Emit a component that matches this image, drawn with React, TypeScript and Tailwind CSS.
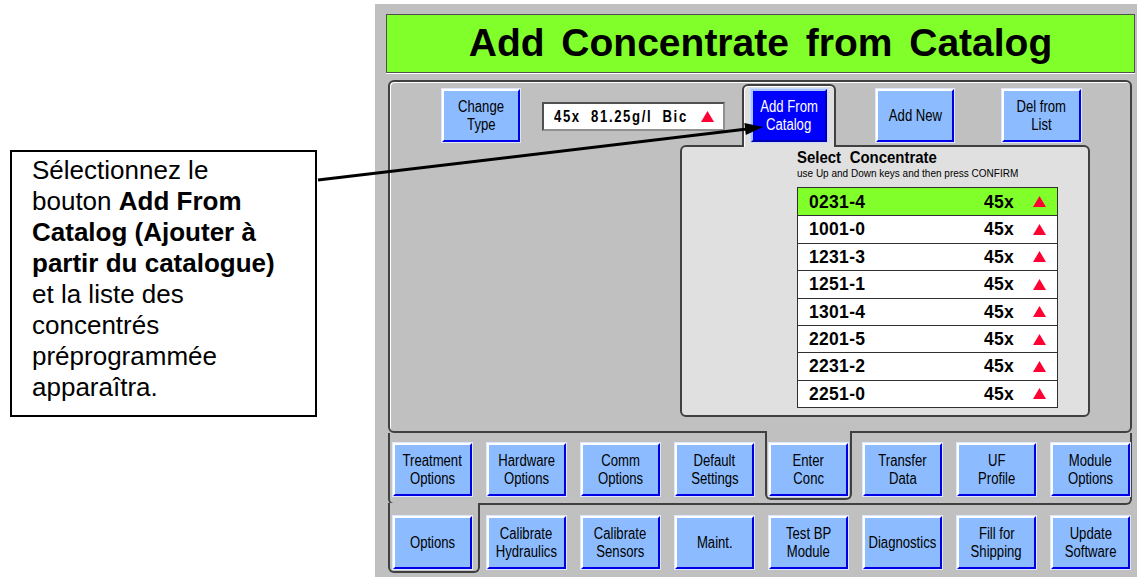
import React from 'react';

const ARIAL = "font-['Liberation_Sans',Arial,sans-serif]";

interface BtnProps {
  lines: string[];
  selected?: boolean;
  w?: string;
}

// the panel font is a narrow grotesque; Liberation Sans squeezed to Arial Narrow widths
const Btn: React.FC<BtnProps> = ({ lines, selected = false, w = 'w-[79px]' }) => (
  <div
    className={`${w} ${ARIAL} flex h-[53px] shrink-0 flex-col items-center justify-center border-2 text-[16px] leading-[18px] ${
      selected
        ? 'border-t-[#a8c4ff] border-l-[#a8c4ff] border-r-[#0000b0] border-b-[#0000b0] bg-[#0000ff] text-white ring-1 ring-[#c8d8ff]'
        : 'border-t-white border-l-white border-r-[#0000e6] border-b-[#0000e6] bg-[#8cbcff] text-black ring-1 ring-[#dde8ff]'
    }`}
  >
    {lines.map((l) => (
      <span key={l} className="inline-block scale-x-[0.82] whitespace-nowrap">
        {l}
      </span>
    ))}
  </div>
);

const Tri = () => (
  <svg width="13" height="11" viewBox="0 0 13 11" className="shrink-0">
    <polygon points="6.5,0 13,11 0,11" fill="#ff0033" />
  </svg>
);

const concentrates = ['0231-4', '1001-0', '1231-3', '1251-1', '1301-4', '2201-5', '2231-2', '2251-0'];

const row2: { lines: string[]; tab?: boolean }[] = [
  { lines: ['Treatment', 'Options'] },
  { lines: ['Hardware', 'Options'] },
  { lines: ['Comm', 'Options'] },
  { lines: ['Default', 'Settings'] },
  { lines: ['Enter', 'Conc'], tab: true },
  { lines: ['Transfer', 'Data'] },
  { lines: ['UF', 'Profile'] },
  { lines: ['Module', 'Options'] },
];

const row3: { lines: string[]; tab?: boolean }[] = [
  { lines: ['Options'], tab: true },
  { lines: ['Calibrate', 'Hydraulics'] },
  { lines: ['Calibrate', 'Sensors'] },
  { lines: ['Maint.'] },
  { lines: ['Test BP', 'Module'] },
  { lines: ['Diagnostics'] },
  { lines: ['Fill for', 'Shipping'] },
  { lines: ['Update', 'Software'] },
];

const App: React.FC = () => {
  return (
    <div className="relative flex h-[577px] w-[1139px] items-start overflow-hidden bg-white">
      {/* callout */}
      <div
        className={`${ARIAL} ml-[10px] mt-[150px] h-[267px] w-[307px] shrink-0 border-2 border-black bg-white pl-[20px] pt-[3px] text-[26px] leading-[31px] text-black`}
      >
        Sélectionnez le
        <br />
        bouton <b>Add From</b>
        <br />
        <b>Catalog (Ajouter à</b>
        <br />
        <b>partir du catalogue)</b>
        <br />
        et la liste des
        <br />
        concentrés
        <br />
        préprogrammée
        <br />
        apparaîtra.
      </div>

      {/* machine screen */}
      <div className="ml-[58px] mt-[4px] h-[573px] w-[762px] shrink-0 overflow-hidden bg-[#c0c0c0]">
        <div className="ml-[11px] mt-[10px] flex h-[59px] w-[749px] items-center justify-center border border-[#505050] bg-[#80ff2b] shadow-[0_1px_0_#ffffff]">
          <span className={`${ARIAL} text-[39px] font-bold text-black [word-spacing:6px]`}>
            Add Concentrate from Catalog
          </span>
        </div>

        {/* upper frame */}
        <div className="ml-[13px] mt-[7px] h-[353px] w-[744px] rounded-[6px] border-2 border-[#404040] shadow-[inset_1px_1px_0_#ffffff]">
          <div className="flex items-start">
            <div className="ml-[52px] mt-[7px]">
              <Btn lines={['Change', 'Type']} w="w-[78px]" />
            </div>
            <div className="ml-[22px] mt-[20px] flex h-[29px] w-[183px] items-center overflow-hidden border-2 border-t-[#505050] border-l-[#505050] border-r-[#909090] border-b-[#909090] bg-white pl-[10px]">
              <span
                className={`${ARIAL} inline-block w-[147px] origin-left scale-x-[0.82] whitespace-nowrap text-[16px] font-bold tracking-[2px] text-black [word-spacing:6px]`}
              >
                45x 81.25g/l Bic
              </span>
              <Tri />
            </div>
            <div className="relative z-10 ml-[17px] mt-[2px] -mb-[2px] rounded-t-[6px] border-2 border-b-0 border-[#404040] bg-[#e0e0e0] px-[7px] pt-[3px] pb-[5px] shadow-[inset_1px_1px_0_#ffffff]">
              <Btn lines={['Add From', 'Catalog']} selected w="w-[76px]" />
            </div>
            <div className="ml-[40px] mt-[7px]">
              <Btn lines={['Add New']} w="w-[78px]" />
            </div>
            <div className="ml-[48px] mt-[7px]">
              <Btn lines={['Del from', 'List']} />
            </div>
          </div>

          {/* concentrate panel */}
          <div className="ml-[290px] h-[272px] w-[410px] rounded-[6px] border-2 border-[#404040] bg-[#e0e0e0] pl-[115px] pt-[1px]">
            <div
              className={`${ARIAL} block w-max origin-left scale-x-[0.88] whitespace-nowrap text-[17px] font-bold leading-[20px] text-black [word-spacing:5px]`}
            >
              Select Concentrate
            </div>
            <div className={`${ARIAL} text-[10px] leading-[12px] text-black`}>
              use Up and Down keys and then press CONFIRM
            </div>
            <div className="mt-[7px] w-[261px] border border-[#303030] bg-white">
              {concentrates.map((c, i) => (
                <div
                  key={c}
                  className={`${ARIAL} flex h-[27.375px] items-center pl-[11px] text-[17.5px] font-bold tracking-[0.3px] text-black ${
                    i === 0 ? 'bg-[#80ff2b]' : 'border-t border-[#303030]'
                  }`}
                >
                  <span className="w-[175px]">{c}</span>
                  <span className="w-[49px]">45x</span>
                  <Tri />
                </div>
              ))}
            </div>
          </div>
        </div>

        {/* middle frame */}
        <div className="ml-[13px] w-[744px] rounded-b-[6px] border-2 border-t-0 border-[#404040] pb-[3px]">
          <div className="flex items-start gap-[15px] pl-[3px]">
            {row2.map((b) =>
              b.tab ? (
                <div
                  key={b.lines.join()}
                  className="-mx-[4px] -mt-[2px] rounded-b-[6px] border-2 border-t-0 border-[#404040] bg-[#c0c0c0] px-[2px] pt-[12px] pb-[2px]"
                >
                  <Btn lines={b.lines} />
                </div>
              ) : (
                <div key={b.lines.join()} className="mt-[10px]">
                  <Btn lines={b.lines} />
                </div>
              ),
            )}
          </div>
        </div>

        {/* bottom row */}
        <div className="ml-[13px] flex w-[744px] items-start gap-[15px] pl-[5px]">
          {row3.map((b) =>
            b.tab ? (
              <div
                key={b.lines.join()}
                className="-ml-[5px] -mr-[8px] -mt-[2px] rounded-b-[6px] border-2 border-t-0 border-[#404040] bg-[#c0c0c0] pl-[3px] pr-[6px] pt-[13px] pb-[2px]"
              >
                <Btn lines={b.lines} />
              </div>
            ) : (
              <div key={b.lines.join()} className="mt-[11px]">
                <Btn lines={b.lines} />
              </div>
            ),
          )}
        </div>
      </div>

      {/* pointer arrow */}
      <svg className="pointer-events-none absolute left-0 top-0 z-20" width="1139" height="577">
        <line x1="318" y1="180" x2="747" y2="129" stroke="#000" strokeWidth="3" />
        <polygon points="763,127 745.8,135.1 744.4,123.1" fill="#000" />
      </svg>
    </div>
  );
};

export default App;
